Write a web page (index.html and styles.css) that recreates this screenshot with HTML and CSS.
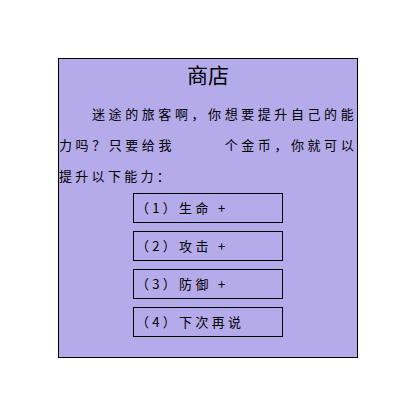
FILE: index.html
```html
<!DOCTYPE html>
<html lang="zh">
<head>
<meta charset="utf-8">
<link rel="stylesheet" href="styles.css">
</head>
<body>
<div class="shop">
  <h1 class="title">商店</h1>
  <p class="intro">迷途的旅客啊，你想要提升自己的能力吗？只要给我　　　个金币，你就可以提升以下能力：</p>
  <div class="options">
    <div class="option">（1）生命 +</div>
    <div class="option">（2）攻击 +</div>
    <div class="option">（3）防御 +</div>
    <div class="option">（4）下次再说</div>
  </div>
</div>
</body>
</html>
```
FILE: styles.css
```css
html, body {
  margin: 0;
  padding: 0;
  background: #ffffff;
}
body {
  padding: 58px;
  font-family: "Noto Sans CJK SC", "Noto Sans", sans-serif;
  color: #000000;
}
.shop {
  width: 298px;
  height: 298px;
  border: 1px solid #000000;
  background: #b5abea;
  display: flex;
  flex-direction: column;
}
.title {
  margin: 0;
  font-size: 21px;
  font-weight: normal;
  line-height: 30px;
  text-align: center;
}
.intro {
  margin: 9px 0 0 0;
  font-size: 13px;
  line-height: 31px;
  letter-spacing: 3.3px;
  text-indent: 33px;
  text-align: justify;
}
.options {
  margin-top: 2px;
  display: flex;
  flex-direction: column;
  align-items: center;
  gap: 8px;
}
.option {
  box-sizing: border-box;
  width: 150px;
  height: 30px;
  border: 1px solid #000000;
  padding-left: 2px;
  font-size: 13px;
  line-height: 28px;
  letter-spacing: 3.3px;
}
```
